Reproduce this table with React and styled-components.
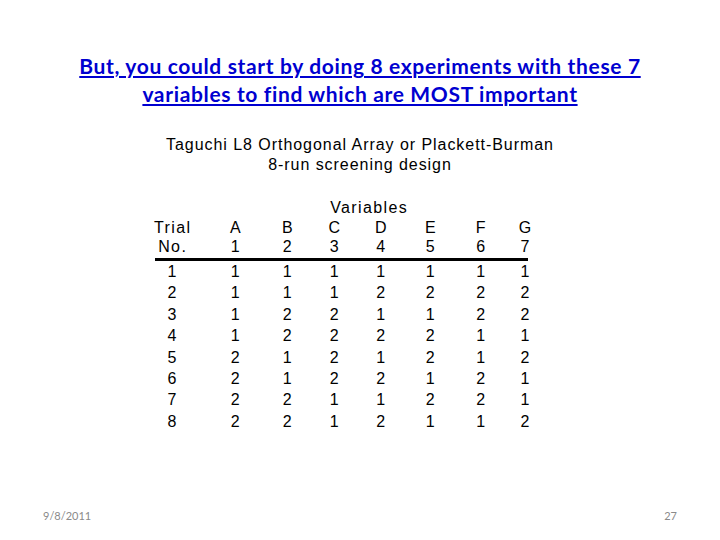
import React from 'react'
import styled, { createGlobalStyle } from 'styled-components'

const GlobalStyle = createGlobalStyle`
  html, body {
    margin: 0;
    padding: 0;
    background: #ffffff;
  }
`

const Slide = styled.div`
  width: 720px;
  height: 540px;
  display: flex;
  flex-direction: column;
  background: #ffffff;
  overflow: hidden;
`

const Title = styled.h1`
  margin: 52px 0 0;
  font-family: Lato, 'Liberation Sans', sans-serif;
  font-weight: 700;
  font-size: 21px;
  letter-spacing: 0.65px;
  line-height: 28px;
  color: #0000d0;
  text-align: center;
  text-decoration: underline;
  text-decoration-thickness: 2px;
  text-underline-offset: 2px;
`

const Subtitle = styled.p`
  margin: 27px 0 0;
  font-family: 'Liberation Sans', Arial, sans-serif;
  font-size: 16px;
  letter-spacing: 0.95px;
  line-height: 20px;
  color: #000000;
  text-align: center;
`

const Table = styled.div`
  margin: 23px 0 0 137.5px;
  width: 408px;
  display: grid;
  grid-template-columns: 69px 57.5px 46.5px 47.5px 45.5px 53.5px 47.5px 41px;
  font-family: 'Liberation Sans', Arial, sans-serif;
  font-size: 16px;
  letter-spacing: 1.4px;
  text-indent: 1.4px;
  color: #000000;
`

const Cell = styled.div`
  text-align: center;
  line-height: ${p => p.$lh || '21.4px'};
`

const Caption = styled.div`
  grid-column: 2 / -1;
  padding-right: 15px;
  text-align: center;
  line-height: 20px;
`

const Rule = styled.div`
  grid-column: 1 / -1;
  margin: 2px 17.5px 0;
  height: 3px;
  background: #000000;
`

const Footer = styled.footer`
  margin-top: auto;
  margin-bottom: 18px;
  padding: 0 43px;
  display: flex;
  justify-content: space-between;
  font-family: Lato, 'Liberation Sans', sans-serif;
  font-size: 11px;
  color: #8a8a8a;
`

const letters = ['A', 'B', 'C', 'D', 'E', 'F', 'G']

const runs = [
  [1, 1, 1, 1, 1, 1, 1],
  [1, 1, 1, 2, 2, 2, 2],
  [1, 2, 2, 1, 1, 2, 2],
  [1, 2, 2, 2, 2, 1, 1],
  [2, 1, 2, 1, 2, 1, 2],
  [2, 1, 2, 2, 1, 2, 1],
  [2, 2, 1, 1, 2, 2, 1],
  [2, 2, 1, 2, 1, 1, 2],
]

const App = () => (
  <>
    <GlobalStyle />
    <Slide>
      <Title>
        But, you could start by doing 8 experiments with these 7
        <br />
        variables to find which are MOST important
      </Title>
      <Subtitle>
        Taguchi L8 Orthogonal Array or Plackett-Burman
        <br />
        8-run screening design
      </Subtitle>
      <Table>
        <Caption>Variables</Caption>
        <Cell $lh="20px">Trial</Cell>
        {letters.map(l => (
          <Cell $lh="20px" key={l}>{l}</Cell>
        ))}
        <Cell $lh="18px">No.</Cell>
        {letters.map((l, i) => (
          <Cell $lh="18px" key={l + i}>{i + 1}</Cell>
        ))}
        <Rule />
        {runs.map((row, r) => (
          <React.Fragment key={r}>
            <Cell>{r + 1}</Cell>
            {row.map((v, c) => (
              <Cell key={c}>{v}</Cell>
            ))}
          </React.Fragment>
        ))}
      </Table>
      <Footer>
        <span>9/8/2011</span>
        <span>27</span>
      </Footer>
    </Slide>
  </>
)

export default App
